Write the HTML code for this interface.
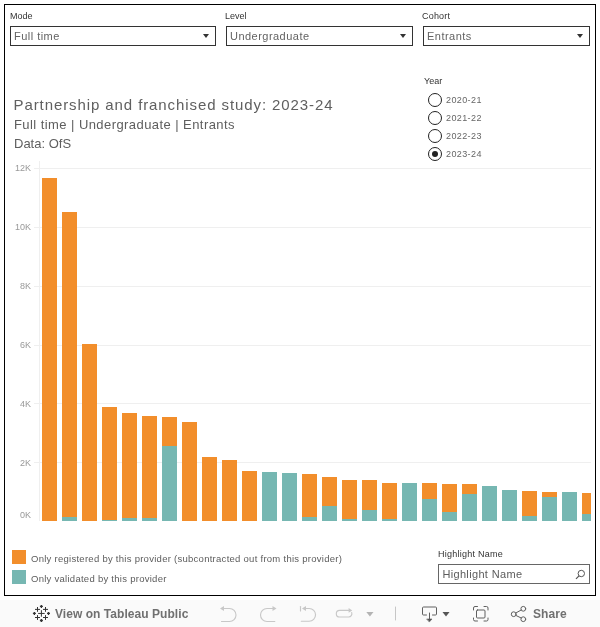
<!DOCTYPE html>
<html><head><meta charset="utf-8"><title>Partnership and franchised study</title>
<style>
html,body{margin:0;padding:0;background:#fff;}
body{width:600px;height:627px;position:relative;overflow:hidden;font-family:"Liberation Sans",sans-serif;}
.abs{position:absolute;white-space:nowrap;}
#frame{position:absolute;left:4px;top:4px;width:590px;height:590px;border:1px solid #000;}
.flabel{position:absolute;font-size:9px;line-height:12px;color:#333;white-space:nowrap;}
.sel{position:absolute;top:26px;height:18px;border:1px solid #333;background:#fff;box-sizing:content-box;}
.sel span{position:absolute;left:3px;top:3px;font-size:11px;letter-spacing:0.47px;line-height:13px;color:#636363;white-space:nowrap;}
.sel i{position:absolute;right:6px;top:7px;width:0;height:0;border-left:3.5px solid transparent;border-right:3.5px solid transparent;border-top:4.5px solid #333;}
.yl{position:absolute;left:0;width:31px;text-align:right;font-size:9px;line-height:12px;color:#999;}
.radio{position:absolute;left:428px;width:12px;height:12px;border:1px solid #222;border-radius:50%;background:#fff;}
.radio.on::after{content:"";position:absolute;left:3px;top:3px;width:6px;height:6px;border-radius:50%;background:#222;}
.rl{position:absolute;left:446px;letter-spacing:0.4px;font-size:9px;line-height:12px;color:#666;white-space:nowrap;}
.lg{position:absolute;left:12px;width:14px;height:14px;}
.lt{position:absolute;left:31px;letter-spacing:0.27px;font-size:9.5px;line-height:12px;color:#5c5c5c;white-space:nowrap;}
#toolbar{position:absolute;left:0;top:600px;width:600px;height:27px;background:#fafafa;}
.tb{position:absolute;font-size:12px;line-height:14px;font-weight:bold;color:#707070;letter-spacing:0.05px;white-space:nowrap;}
</style></head><body>
<div id="frame"></div>
<div id="layer" style="position:absolute;left:0;top:0;width:600px;height:627px;will-change:transform">

<div class="flabel" id="l1" style="left:10px;top:10px">Mode</div>
<div class="sel" style="left:10px;width:204px"><span id="s1">Full time</span><i></i></div>
<div class="flabel" id="l2" style="left:225px;top:10px">Level</div>
<div class="sel" style="left:226px;width:185px"><span id="s2">Undergraduate</span><i></i></div>
<div class="flabel" id="l3" style="left:422px;top:10px;letter-spacing:0.2px">Cohort</div>
<div class="sel" style="left:423px;width:165px"><span id="s3">Entrants</span><i></i></div>

<div class="abs" id="title" style="left:13.500px;top:96px;font-size:15px;letter-spacing:0.91px;line-height:18px;color:#606060">Partnership and franchised study: 2023-24</div>
<div class="abs" id="sub1" style="left:14px;top:117px;font-size:13px;letter-spacing:0.43px;line-height:15px;color:#5e5e5e">Full time | Undergraduate | Entrants</div>
<div class="abs" id="sub2" style="left:14px;top:136px;font-size:13px;line-height:15px;color:#5e5e5e">Data: OfS</div>

<div class="flabel" id="yl" style="left:424px;top:75px">Year</div>
<div class="radio" style="top:93px"></div><div class="rl" id="r1" style="top:94px">2020-21</div>
<div class="radio" style="top:111px"></div><div class="rl" style="top:112px">2021-22</div>
<div class="radio" style="top:129px"></div><div class="rl" style="top:130px">2022-23</div>
<div class="radio on" style="top:147px"></div><div class="rl" style="top:148px">2023-24</div>

<svg class="abs" style="left:0;top:0" width="600" height="600" shape-rendering="crispEdges">
<rect x="34" y="168" width="557" height="1" fill="#efefef"/>
<rect x="34" y="227" width="557" height="1" fill="#efefef"/>
<rect x="34" y="286" width="557" height="1" fill="#efefef"/>
<rect x="34" y="345" width="557" height="1" fill="#efefef"/>
<rect x="34" y="403" width="557" height="1" fill="#efefef"/>
<rect x="34" y="462" width="557" height="1" fill="#efefef"/>
<rect x="39" y="161" width="1" height="360" fill="#efefef"/>
<rect x="42" y="178" width="15" height="343" fill="#f28e2b"/>
<rect x="62" y="212" width="15" height="305" fill="#f28e2b"/>
<rect x="62" y="517" width="15" height="4" fill="#76b7b2"/>
<rect x="82" y="344" width="15" height="177" fill="#f28e2b"/>
<rect x="102" y="407" width="15" height="113" fill="#f28e2b"/>
<rect x="102" y="520" width="15" height="1" fill="#76b7b2"/>
<rect x="122" y="413" width="15" height="105" fill="#f28e2b"/>
<rect x="122" y="518" width="15" height="3" fill="#76b7b2"/>
<rect x="142" y="416" width="15" height="102" fill="#f28e2b"/>
<rect x="142" y="518" width="15" height="3" fill="#76b7b2"/>
<rect x="162" y="417" width="15" height="29" fill="#f28e2b"/>
<rect x="162" y="446" width="15" height="75" fill="#76b7b2"/>
<rect x="182" y="422" width="15" height="99" fill="#f28e2b"/>
<rect x="202" y="457" width="15" height="64" fill="#f28e2b"/>
<rect x="222" y="460" width="15" height="61" fill="#f28e2b"/>
<rect x="242" y="471" width="15" height="50" fill="#f28e2b"/>
<rect x="262" y="472" width="15" height="49" fill="#76b7b2"/>
<rect x="282" y="473" width="15" height="48" fill="#76b7b2"/>
<rect x="302" y="474" width="15" height="43" fill="#f28e2b"/>
<rect x="302" y="517" width="15" height="4" fill="#76b7b2"/>
<rect x="322" y="477" width="15" height="29" fill="#f28e2b"/>
<rect x="322" y="506" width="15" height="15" fill="#76b7b2"/>
<rect x="342" y="480" width="15" height="39" fill="#f28e2b"/>
<rect x="342" y="519" width="15" height="2" fill="#76b7b2"/>
<rect x="362" y="480" width="15" height="30" fill="#f28e2b"/>
<rect x="362" y="510" width="15" height="11" fill="#76b7b2"/>
<rect x="382" y="483" width="15" height="36" fill="#f28e2b"/>
<rect x="382" y="519" width="15" height="2" fill="#76b7b2"/>
<rect x="402" y="483" width="15" height="38" fill="#76b7b2"/>
<rect x="422" y="483" width="15" height="16" fill="#f28e2b"/>
<rect x="422" y="499" width="15" height="22" fill="#76b7b2"/>
<rect x="442" y="484" width="15" height="28" fill="#f28e2b"/>
<rect x="442" y="512" width="15" height="9" fill="#76b7b2"/>
<rect x="462" y="484" width="15" height="10" fill="#f28e2b"/>
<rect x="462" y="494" width="15" height="27" fill="#76b7b2"/>
<rect x="482" y="486" width="15" height="35" fill="#76b7b2"/>
<rect x="502" y="490" width="15" height="31" fill="#76b7b2"/>
<rect x="522" y="491" width="15" height="25" fill="#f28e2b"/>
<rect x="522" y="516" width="15" height="5" fill="#76b7b2"/>
<rect x="542" y="492" width="15" height="5" fill="#f28e2b"/>
<rect x="542" y="497" width="15" height="24" fill="#76b7b2"/>
<rect x="562" y="492" width="15" height="29" fill="#76b7b2"/>
<rect x="582" y="493" width="9" height="21" fill="#f28e2b"/>
<rect x="582" y="514" width="9" height="7" fill="#76b7b2"/>
</svg>
<div class="yl" style="top:162px">12K</div>
<div class="yl" style="top:221px">10K</div>
<div class="yl" style="top:280px">8K</div>
<div class="yl" style="top:339px">6K</div>
<div class="yl" style="top:398px">4K</div>
<div class="yl" style="top:457px">2K</div>
<div class="yl" style="top:509px">0K</div>

<div class="lg" style="top:550px;background:#f28e2b"></div>
<div class="lt" id="lt1" style="top:553px">Only registered by this provider (subcontracted out from this provider)</div>
<div class="lg" style="top:570px;background:#76b7b2"></div>
<div class="lt" id="lt2" style="top:573px">Only validated by this provider</div>

<div class="flabel" id="hl" style="left:438px;top:548px;letter-spacing:0.24px">Highlight Name</div>
<div class="abs" style="left:438px;top:564px;width:150px;height:18px;border:1px solid #666;background:#fff">
<span class="abs" id="hi" style="left:3.4px;top:3px;font-size:11px;letter-spacing:0.34px;line-height:13px;color:#5c5c5c">Highlight Name</span>
<svg class="abs" style="left:135px;top:3px" width="12" height="12" viewBox="0 0 12 12"><circle cx="7.3" cy="5.5" r="3.2" fill="none" stroke="#555" stroke-width="1"/><path d="M5,7.8 L2,10.8" stroke="#555" stroke-width="1.2" fill="none"/></svg>
</div>

<div id="toolbar">
<svg class="abs" style="left:0;top:0" width="600" height="27" viewBox="0 600 600 27" fill="none" stroke-linecap="round" stroke-linejoin="round">
<!-- tableau logo -->
<g stroke="#333" stroke-width="1" stroke-linecap="butt">
<path d="M41.400,610.200v6.500M38.150,613.450h6.500"/>
<path d="M37.500,607v4.800M35,609.400h5M45.500,607v4.800M43,609.400h5M37.500,615.100v4.800M35,617.500h5M45.500,615.100v4.800M43,617.500h5"/>
<path d="M41.400,604.900v3M39.900,606.400h3M41.400,619v3M39.900,620.500h3M34.400,611.950v3M32.900,613.450h3M48.500,611.950v3M47,613.450h3" stroke-width="1.300"/>
</g>
<!-- undo -->
<g stroke="#c8c8c8" stroke-width="1.15">
<path d="M221.500,621.500H229.500A6.500,6.500 0 0 0 229.500,608.500H222"/>
<path d="M220,608.500L224,606V611Z" fill="#c8c8c8" stroke="none"/>
<path d="M274.800,621.500H267A6.500,6.500 0 0 1 267,608.500H274.500"/>
<path d="M276.500,608.500L272.500,606V611Z" fill="#c8c8c8" stroke="none"/>
<path d="M301.300,621.200H309.200A6.350,6.350 0 0 0 309.200,608.500H303.500"/>
<path d="M302,608.500L306,606V611Z" fill="#c8c8c8" stroke="none"/>
<path d="M300.500,606.500V611"/>
<path d="M349,610.400H339.600A3.300,3.300 0 0 0 339.600,617H348.600A3.300,3.300 0 0 0 351.700,612.600"/>
<path d="M352.200,610.400L348.600,608V612.800Z" fill="#c8c8c8" stroke="none"/>
</g>
<path d="M366.300,612H373.500L369.900,616.600Z" fill="#b4b4b4"/>
<path d="M395.500,607V620" stroke="#c6c6c6" stroke-width="1"/>
<!-- download -->
<g stroke="#606060" stroke-width="1">
<path d="M426.500,615H423.500A1,1 0 0 1 422.500,614V608A1,1 0 0 1 423.500,607H435.500A1,1 0 0 1 436.500,608V614A1,1 0 0 1 435.500,615H432.500"/>
<path d="M429.500,613V620"/>
<path d="M427,619H432L429.500,621.800Z" fill="#555" stroke-width="0.6"/>
</g>
<path d="M442.500,612H449.500L446,616.500Z" fill="#555"/>
<!-- fullscreen -->
<g stroke="#606060" stroke-width="1">
<rect x="476.500" y="610" width="8.500" height="8" rx="1"/>
<path d="M473.500,610V608A1.500,1.500 0 0 1 475,606.500H477.500M484,606.500H486.500A1.500,1.500 0 0 1 488,608V610M488,618V619.500A1.500,1.500 0 0 1 486.500,621H484M477.500,621H475A1.500,1.500 0 0 1 473.500,619.500V618"/>
</g>
<!-- share -->
<g stroke="#606060" stroke-width="1">
<circle cx="513.700" cy="614.200" r="2.400"/><circle cx="523.300" cy="608.800" r="2.400"/><circle cx="523.300" cy="619.200" r="2.400"/>
<path d="M515.800,613L521.200,610M515.800,615.400L521.200,618"/>
</g>
</svg>
<div class="tb" id="tb1" style="left:55px;top:6.500px">View on Tableau Public</div>
<div class="tb" id="tb2" style="left:533px;top:6.500px">Share</div>
</div>
</div>
</body></html>
